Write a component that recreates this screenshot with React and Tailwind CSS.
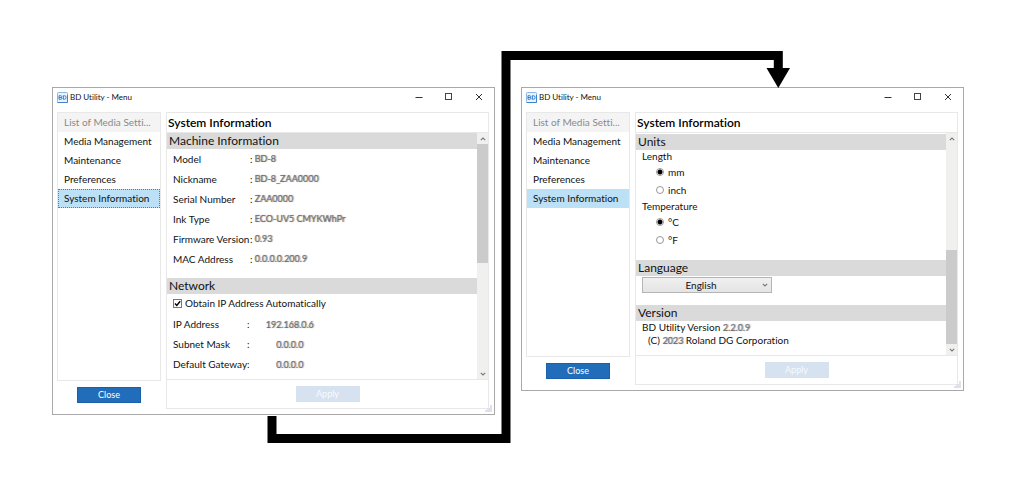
import React, { useState } from 'react';
import clsx from 'clsx';

const MENU = ['Media Management', 'Maintenance', 'Preferences', 'System Information'];

const MACHINE = [
  ['Model', 'BD-8'],
  ['Nickname', 'BD-8_ZAA0000'],
  ['Serial Number', 'ZAA0000'],
  ['Ink Type', 'ECO-UV5 CMYKWhPr'],
  ['Firmware Version', '0.93'],
  ['MAC Address', '0.0.0.0.200.9']
];

const NETWORK = [
  ['IP Address', '192.168.0.6'],
  ['Subnet Mask', '0.0.0.0'],
  ['Default Gateway', '0.0.0.0']
];

function Masked({ children }) {
  return <span className="text-[9px] text-[#6f6f6f] [text-shadow:1px_0_1px_#808080]">{children}</span>;
}

function Chevron({ up = false, className }) {
  return (
    <svg viewBox="0 0 6 4" className={clsx('w-[6px] h-[4px] fill-none', className)} aria-hidden="true">
      <path d={up ? 'M0.8 3.2 3 1 5.2 3.2' : 'M0.8 0.8 3 3 5.2 0.8'} stroke="#777777" strokeWidth="1.1" />
    </svg>
  );
}

function TitleBar() {
  return (
    <header className="flex items-center h-[18px] mb-[6px] pl-1">
      <svg viewBox="0 0 11 11" className="w-[11px] h-[11px] shrink-0" aria-hidden="true">
        <rect x="0.5" y="0.5" width="10" height="10" rx="0.8" fill="#eaf3fc" stroke="#8bb9e6" />
        <path d="M0.5 10.5H10.5V3" fill="none" stroke="#3f83cc" />
        <path d="M2 3.7V7.3H3.7Q5 7.3 5 6.4 5 5.6 4 5.5 4.8 5.3 4.8 4.6 4.8 3.7 3.6 3.7ZM2 5.5H4M6.4 3.7V7.3H7.4Q9.1 7.3 9.1 5.5 9.1 3.7 7.4 3.7Z" fill="none" stroke="#2775c9" strokeWidth="0.9" />
      </svg>
      <h1 className="flex-1 pl-[2px] text-[8px] leading-[18px]">BD Utility - Menu</h1>
      <button type="button" aria-label="Minimize" className="w-[30px] h-[18px] flex items-center justify-center">
        <svg viewBox="0 0 8 8" className="w-2 h-2"><path d="M0.5 4.5H7.5" stroke="#333333" /></svg>
      </button>
      <button type="button" aria-label="Maximize" className="w-[30px] h-[18px] flex items-center justify-center">
        <svg viewBox="0 0 8 8" className="w-2 h-2 fill-none"><rect x="0.5" y="0.5" width="6" height="6" stroke="#444444" /></svg>
      </button>
      <button type="button" aria-label="Close window" className="w-[30px] h-[18px] flex items-center justify-center">
        <svg viewBox="0 0 8 8" className="w-2 h-2"><path d="M1 1 7 7M7 1 1 7" stroke="#333333" /></svg>
      </button>
    </header>
  );
}

function SideMenu({ focused }) {
  return (
    <nav className="flex-1 flex flex-col border border-[#e8e8e8] text-[10px]">
      <button type="button" disabled className="h-[19px] px-[6px] text-left whitespace-nowrap bg-[#f4f4f4] text-[#8a8a8a]">
        List of Media Setti...
      </button>
      {MENU.map((item) => {
        const active = item === 'System Information';
        return (
          <button
            key={item}
            type="button"
            className={clsx(
              'h-[19px] px-[6px] text-left whitespace-nowrap',
              active && 'bg-[#bce0f5]',
              active && focused && 'outline-1 outline-dotted -outline-offset-1 outline-[#4f7f9c]'
            )}
          >
            {item}
          </button>
        );
      })}
    </nav>
  );
}

function ScrollBar({ atEnd }) {
  return (
    <div className="w-[11px] shrink-0 flex flex-col bg-[#f0f0ef]">
      <div className="h-[11px] flex items-center justify-center"><Chevron up /></div>
      <div className={clsx('flex-1 flex flex-col', atEnd && 'justify-end')}>
        <div className={clsx('bg-[#cbcbcb]', atEnd ? 'h-[47%]' : 'h-[53%]')} />
      </div>
      <div className="h-[11px] flex items-center justify-center"><Chevron /></div>
    </div>
  );
}

function SectionTitle({ children }) {
  return <h3 className="h-4 pl-[2px] bg-[#dadada] text-[12px] leading-4">{children}</h3>;
}

function UtilityWindow({ children, focused, atEnd }) {
  return (
    <section className="relative flex-1 min-w-0 border border-[#a9a9a9] bg-white">
      <TitleBar />
      <div className="flex gap-[5px] pl-1 pr-[5px] pb-[5px]">
        <div className="w-[104px] shrink-0 flex flex-col">
          <SideMenu focused={focused} />
          <div className="h-7 flex items-center justify-center">
            <button type="button" className="w-16 h-4 border border-[#1a5fae] bg-[#226db9] text-white text-[9px] leading-[14px]">
              Close
            </button>
          </div>
        </div>
        <div className="flex-1 min-w-0 flex flex-col border border-[#e8e8e8]">
          <h2 className="h-5 pl-px border-b border-[#e8e8e8] text-[12px] leading-5 font-semibold text-black">System Information</h2>
          <div className="flex">
            <div className="flex-1 min-w-0">{children}</div>
            <ScrollBar atEnd={atEnd} />
          </div>
          <div className="h-[29px] flex items-center justify-center border-t border-[#e8e8e8]">
            <button type="button" disabled className="w-16 h-4 bg-[#d6e2f0] text-[#f7fbff] text-[9px] leading-4">
              Apply
            </button>
          </div>
        </div>
      </div>
      <svg viewBox="0 0 8 8" className="absolute right-px bottom-px w-2 h-2" aria-hidden="true">
        <path d="M5 0H7V7H0V5H2V3H5Z" fill="#dfe1ea" />
      </svg>
    </section>
  );
}

function Radio({ name, label, checked, onChange }) {
  return (
    <label className="flex items-center gap-1 h-[18px] pl-[14px] text-[10px]">
      <input
        type="radio"
        name={name}
        checked={checked}
        onChange={onChange}
        className="appearance-none w-2 h-2 rounded-full border border-[#999999] bg-white checked:bg-[radial-gradient(circle_at_center,#000000_2px,#ffffff_3px)]"
      />
      {label}
    </label>
  );
}

function RadioGroup({ title, name, options }) {
  const [value, setValue] = useState(options[0]);
  return (
    <fieldset className="pl-[6px] pb-px">
      <legend className="h-[13px] text-[10px] leading-[13px]">{title}</legend>
      {options.map((o) => (
        <Radio key={o} name={name} label={o} checked={value === o} onChange={() => setValue(o)} />
      ))}
    </fieldset>
  );
}

function MachinePage() {
  const [auto, setAuto] = useState(true);
  return (
    <>
      <SectionTitle>Machine Information</SectionTitle>
      <dl className="pl-[6px] text-[10px] leading-5">
        {MACHINE.map(([label, value]) => (
          <div key={label} className="flex h-5 whitespace-nowrap">
            <dt className="w-[77px]">{label}</dt>
            <dd className="flex gap-[2px]">:<Masked>{value}</Masked></dd>
          </div>
        ))}
      </dl>
      <div className="h-[9px]" />
      <SectionTitle>Network</SectionTitle>
      <label className="flex items-center gap-[3px] h-[19px] mb-px pl-[6px] text-[10px]">
        <input
          type="checkbox"
          checked={auto}
          onChange={() => setAuto(!auto)}
          className="peer appearance-none w-[9px] h-[9px] border border-[#777777]"
        />
        <svg viewBox="0 0 9 9" className="hidden peer-checked:block w-[9px] h-[9px] -ml-3 fill-none" aria-hidden="true">
          <path d="M2 4.5 3.8 6.5 7.2 2.2" stroke="#000000" strokeWidth="1.4" />
        </svg>
        Obtain IP Address Automatically
      </label>
      <dl className="pl-[6px] pb-[5px] text-[10px] leading-5">
        {NETWORK.map(([label, value]) => (
          <div key={label} className="flex h-5 whitespace-nowrap">
            <dt className="w-[74px]">{label}</dt>
            <dd className="flex">:<span className="w-20 text-center"><Masked>{value}</Masked></span></dd>
          </div>
        ))}
      </dl>
    </>
  );
}

function UnitsPage() {
  return (
    <div className="pt-px">
      <SectionTitle>Units</SectionTitle>
      <RadioGroup title="Length" name="length" options={['mm', 'inch']} />
      <RadioGroup title="Temperature" name="temperature" options={['°C', '°F']} />
      <div className="h-[10px]" />
      <SectionTitle>Language</SectionTitle>
      <div className="relative w-[130px] mt-px ml-[6px] mb-3">
        <select
          aria-label="Language"
          defaultValue="English"
          className="block appearance-none w-full h-4 pr-3 border border-[#b5b5b5] bg-linear-to-b from-[#f0f0f0] to-[#e4e4e4] text-[10px] leading-[14px] [text-align-last:center]"
        >
          <option>English</option>
        </select>
        <Chevron className="absolute right-1 top-[6px] pointer-events-none" />
      </div>
      <SectionTitle>Version</SectionTitle>
      <div className="h-[34px] pl-[6px] text-[10px] leading-[13px]">
        <p>BD Utility Version <Masked>2.2.0.9</Masked></p>
        <p className="pl-[6px]">(C) <Masked>2023</Masked> Roland DG Corporation</p>
      </div>
    </div>
  );
}

export default function App() {
  return (
    <div className="relative min-h-screen bg-white text-[#111111] font-['Lato','Open_Sans',sans-serif] [font-variant-ligatures:none]">
      <main className="flex items-start gap-[26px] pl-[52px] pr-[51px] pt-[87px]">
        <UtilityWindow focused>
          <MachinePage />
        </UtilityWindow>
        <UtilityWindow atEnd>
          <UnitsPage />
        </UtilityWindow>
      </main>
      <svg viewBox="0 0 1015 494" className="absolute left-0 top-0 w-full pointer-events-none" aria-hidden="true">
        <path d="M272 416V438.500H506V55.500H778.300V70" fill="none" stroke="#000000" strokeWidth="9" />
        <path d="M766.500 68H790L778.300 88Z" />
      </svg>
    </div>
  );
}
